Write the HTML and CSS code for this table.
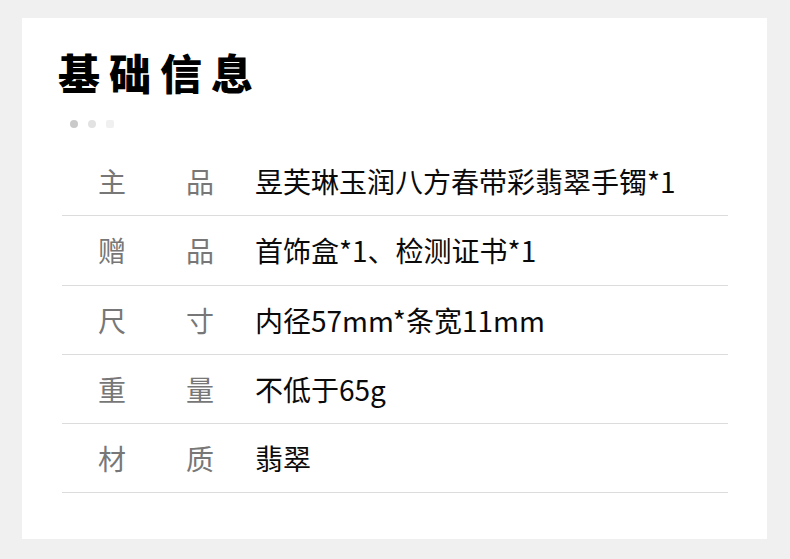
FILE: index.html
```html
<!DOCTYPE html>
<html>
<head>
    <title>基础信息</title>
    <link rel="stylesheet" href="styles.css">
</head>
<body>
    <div class="card">
        <h1 class="title">基础信息</h1>

        <div class="dots">
            <span class="dot dot-1"></span>
            <span class="dot dot-2"></span>
            <span class="dot dot-3"></span>
        </div>

        <div class="info-list">
            <div class="info-row">
                <div class="info-label"><span>主</span><span>品</span></div>
                <div class="info-value">昱芙琳玉润八方春带彩翡翠手镯*1</div>
            </div>
            <div class="info-row">
                <div class="info-label"><span>赠</span><span>品</span></div>
                <div class="info-value">首饰盒*1、检测证书*1</div>
            </div>
            <div class="info-row">
                <div class="info-label"><span>尺</span><span>寸</span></div>
                <div class="info-value">内径57mm*条宽11mm</div>
            </div>
            <div class="info-row">
                <div class="info-label"><span>重</span><span>量</span></div>
                <div class="info-value">不低于65g</div>
            </div>
            <div class="info-row">
                <div class="info-label"><span>材</span><span>质</span></div>
                <div class="info-value">翡翠</div>
            </div>
        </div>
    </div>
</body>
</html>
```

FILE: styles.css
```css
/* GENERAL */
body {
    background-color: #f0f0f0;
    margin: 0;
    padding: 0;
    font-family: "Noto Sans CJK SC", "Liberation Sans", sans-serif;
}

.card {
    background-color: #fff;
    margin: 18px 23px 20px 22px;
    height: 521px;
    padding: 0 39px 0 40px;
    box-sizing: border-box;
    overflow: hidden;
}


/* TITLE */
.title {
    margin: 0 0 0 -4px;
    padding-top: 32px;
    font-size: 42px;
    line-height: 44px;
    font-weight: 900;
    letter-spacing: 9px;
    color: #000;
}

.dots {
    display: flex;
    gap: 10px;
    margin: 26px 0 0 8px;
}

.dot {
    width: 8px;
    height: 8px;
    border-radius: 50%;
}

.dot-1 { background-color: #c9c9c9; }
.dot-2 { background-color: #e2e2e2; }
.dot-3 { background-color: #f0f0f0; border-radius: 2px; }


/* INFO ROWS */
.info-list {
    margin-top: 19px;
}

.info-row {
    display: flex;
    align-items: center;
    height: 68.25px;
    border-bottom: 1px solid #dcdcdc;
    font-size: 28px;
}

.info-label {
    display: flex;
    justify-content: space-between;
    width: 116px;
    margin-left: 36px;
    margin-right: 41px;
    color: #777;
}

.info-value {
    color: #0a0a0a;
}
```
